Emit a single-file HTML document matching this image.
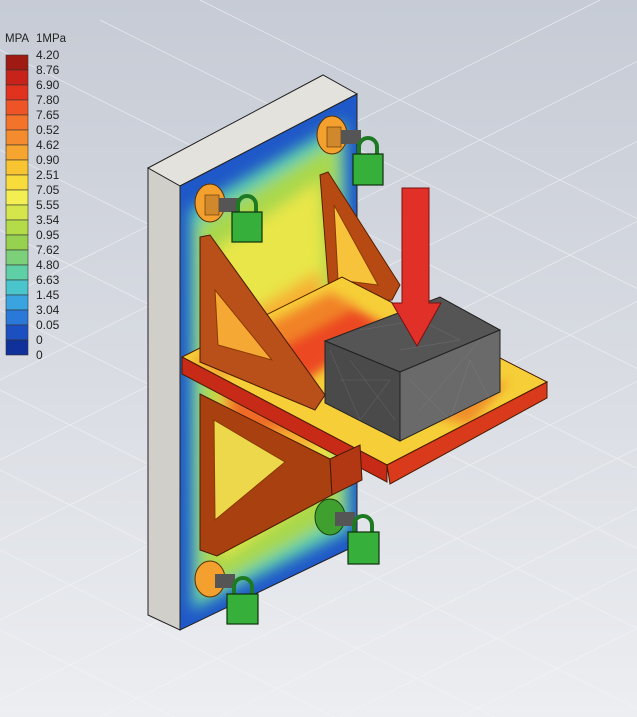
<!DOCTYPE html>
<html><head><meta charset="utf-8"><style>
html,body{margin:0;padding:0;overflow:hidden}
body{width:637px;height:717px;font-family:"Liberation Sans",sans-serif}
svg{display:block}
</style></head><body>
<svg width="637" height="717" viewBox="0 0 637 717" xmlns="http://www.w3.org/2000/svg">
<defs>
<linearGradient id="bg" x1="0" y1="0" x2="0" y2="1">
<stop offset="0" stop-color="#c6cbd5"/><stop offset="0.5" stop-color="#d8dbe2"/><stop offset="1" stop-color="#eceef1"/>
</linearGradient>
<filter id="bl" x="-20%" y="-20%" width="140%" height="140%"><feGaussianBlur stdDeviation="7"/></filter>
<filter id="bl2" x="-20%" y="-20%" width="140%" height="140%"><feGaussianBlur stdDeviation="5"/></filter>
<clipPath id="plate"><polygon points="180,186 357,94 357,545 180,630"/></clipPath>
<clipPath id="shelf"><polygon points="182,357 342,277 547,382 387,465"/></clipPath>
</defs>
<rect width="637" height="717" fill="url(#bg)"/>
<g stroke="#f4f5f7" stroke-width="1" opacity="0.6" fill="none">
<path d="M-100,260 L700,660 M-100,340 L700,740 M-100,420 L600,770 M-100,180 L700,580 M-100,100 L700,500 M0,50 L700,400 M100,20 L700,320 M200,0 L700,250 M-100,500 L500,800 M-100,580 L400,830"/>
<path d="M0,700 L700,350 M0,620 L700,270 M0,540 L700,190 M0,460 L700,110 M0,380 L700,30 M100,717 L700,417 M220,717 L700,477 M340,717 L700,537 M460,717 L700,597 M0,300 L600,0"/>
</g>
<!-- legend -->
<text x="5" y="42" font-size="11.5" fill="#222">MPA</text>
<text x="36" y="42" font-size="11.5" fill="#222">1MPa</text>
<g stroke="#333" stroke-width="0.6">
<rect x="6" y="55" width="22" height="15" fill="#9e1a12"/>
<rect x="6" y="70" width="22" height="15" fill="#c7231a"/>
<rect x="6" y="85" width="22" height="15" fill="#e0321f"/>
<rect x="6" y="100" width="22" height="15" fill="#ee5426"/>
<rect x="6" y="115" width="22" height="15" fill="#f3732b"/>
<rect x="6" y="130" width="22" height="15" fill="#f48c2e"/>
<rect x="6" y="145" width="22" height="15" fill="#f6a62f"/>
<rect x="6" y="160" width="22" height="15" fill="#f8c431"/>
<rect x="6" y="175" width="22" height="15" fill="#f8dc3c"/>
<rect x="6" y="190" width="22" height="15" fill="#f3ef52"/>
<rect x="6" y="205" width="22" height="15" fill="#d5e54c"/>
<rect x="6" y="220" width="22" height="15" fill="#b4dc48"/>
<rect x="6" y="235" width="22" height="15" fill="#96d250"/>
<rect x="6" y="250" width="22" height="15" fill="#7cd07a"/>
<rect x="6" y="265" width="22" height="15" fill="#5fd0a6"/>
<rect x="6" y="280" width="22" height="15" fill="#4bc5cc"/>
<rect x="6" y="295" width="22" height="15" fill="#3aa4e0"/>
<rect x="6" y="310" width="22" height="15" fill="#2a78d8"/>
<rect x="6" y="325" width="22" height="15" fill="#1c50c0"/>
<rect x="6" y="340" width="22" height="15" fill="#10309a"/>
</g>
<g font-size="12" fill="#222">
<text x="36" y="59">4.20</text><text x="36" y="74">8.76</text><text x="36" y="89">6.90</text><text x="36" y="104">7.80</text><text x="36" y="119">7.65</text><text x="36" y="134">0.52</text><text x="36" y="149">4.62</text><text x="36" y="164">0.90</text><text x="36" y="179">2.51</text><text x="36" y="194">7.05</text><text x="36" y="209">5.55</text><text x="36" y="224">3.54</text><text x="36" y="239">0.95</text><text x="36" y="254">7.62</text><text x="36" y="269">4.80</text><text x="36" y="284">6.63</text><text x="36" y="299">1.45</text><text x="36" y="314">3.04</text><text x="36" y="329">0.05</text><text x="36" y="344">0</text><text x="36" y="359">0</text>
</g>
<!-- wall plate -->
<polygon points="148,168 323,75 357,94 180,186" fill="#e4e2dc" stroke="#222" stroke-width="1"/>
<polygon points="148,168 180,186 180,630 148,615" fill="#d0cfca" stroke="#222" stroke-width="1"/>
<g clip-path="url(#plate)">
<rect x="170" y="80" width="200" height="560" fill="#1f58c8"/>
<g filter="url(#bl)">
<polygon points="190,210 345,120 350,530 192,610" fill="#5ccfb0"/>
<polygon points="198,225 338,140 342,515 200,595" fill="#a9d84c"/>
<polygon points="215,250 320,180 335,480 220,560" fill="#e8e64a"/>
<polygon points="220,330 320,270 335,440 225,480" fill="#f6b030"/>
<polygon points="225,360 315,310 330,420 230,440" fill="#ee6a26"/>
</g>
</g>
<polygon points="180,186 357,94 357,545 180,630" fill="none" stroke="#222" stroke-width="1"/>
<!-- bolts upper -->
<ellipse cx="210" cy="203" rx="15" ry="19" fill="#f3a02e" stroke="#5a3000"/>
<rect x="205" y="195" width="14" height="20" fill="#d0882c" stroke="#5a3000" stroke-width="0.6"/>
<rect x="219" y="198" width="20" height="14" fill="#555" />
<ellipse cx="332" cy="135" rx="15" ry="19" fill="#f3a02e" stroke="#5a3000"/>
<rect x="327" y="127" width="14" height="20" fill="#d0882c" stroke="#5a3000" stroke-width="0.6"/>
<rect x="341" y="130" width="20" height="14" fill="#555"/>
<!-- upper right gusset -->
<polygon points="320,175 328,172 400,285 392,300 330,305" fill="#b74a12" stroke="#5a2000"/>
<polygon points="334,205 338,280 378,285" fill="#f6c33a" stroke="#8a3a00"/>
<!-- shelf -->
<polygon points="182,357 342,277 547,382 387,465" fill="#f6cf38" stroke="#4a1a00"/>
<g clip-path="url(#shelf)" filter="url(#bl2)">
<polygon points="215,355 330,295 385,325 300,385" fill="#ec4a20"/>
<polygon points="190,360 330,290 360,305 220,380" fill="#f49a2c" opacity="0.7"/>
<polygon points="400,410 510,380 470,425" fill="#f0902a"/>
</g>
<polygon points="182,357 387,465 387,482 182,374" fill="#c72a16" stroke="#4a1a00"/>
<polygon points="387,465 547,382 547,398 390,484" fill="#d93a1c" stroke="#4a1a00"/>
<!-- lower gusset -->
<polygon points="200,394 330,459 332,495 217,556 200,550" fill="#a84010" stroke="#4a1a00"/>
<polygon points="214,420 215,520 285,462" fill="#ecd84a" stroke="#8a3a00"/>
<polygon points="330,459 360,445 362,480 332,495" fill="#b23814" stroke="#4a1a00"/>
<!-- upper left gusset -->
<polygon points="200,237 210,235 325,395 315,410 200,362" fill="#b9501a" stroke="#4a1a00"/>
<polygon points="215,290 218,345 272,360" fill="#f6a834" stroke="#8a3a00"/>
<!-- block -->
<polygon points="325,341 440,297 500,330 400,372" fill="#555" stroke="#222"/>
<polygon points="325,341 400,372 400,441 325,403" fill="#4a4a4a" stroke="#222"/>
<polygon points="400,372 500,330 500,392 400,441" fill="#6a6a6a" stroke="#222"/>
<g stroke="#999" stroke-width="0.3" fill="none" opacity="0.6">
<path d="M330,350 L360,420 L390,380 L340,380 M350,360 L395,420 M410,380 L450,420 L470,360 L490,400 M420,410 L480,340 M360,330 L420,320 L460,340 L400,350"/>
</g>
<!-- arrow -->
<polygon points="402,188 429,188 429,303 441,303 417,346 392,303 402,303" fill="#e03028" stroke="#7a1010"/>
<!-- bolts lower -->
<ellipse cx="330" cy="517" rx="15" ry="18" fill="#3fa030" stroke="#1a4010"/>
<rect x="335" y="512" width="20" height="14" fill="#555"/>
<ellipse cx="210" cy="579" rx="15" ry="18" fill="#f3a02e" stroke="#5a3000"/>
<rect x="215" y="574" width="20" height="14" fill="#555"/>
<!-- locks -->
<g fill="#36b03a" stroke="#103010" stroke-width="1.2">
<path d="M238,213 v-8 a9,9 0 0 1 18,0 v8" fill="none" stroke="#1d7a22" stroke-width="4"/>
<rect x="232" y="212" width="30" height="30"/>
<path d="M359,155 v-8 a9,9 0 0 1 18,0 v8" fill="none" stroke="#1d7a22" stroke-width="4"/>
<rect x="353" y="154" width="30" height="31"/>
<path d="M354,533 v-8 a9,9 0 0 1 18,0 v8" fill="none" stroke="#1d7a22" stroke-width="4"/>
<rect x="348" y="532" width="31" height="32"/>
<path d="M234,595 v-8 a9,9 0 0 1 18,0 v8" fill="none" stroke="#1d7a22" stroke-width="4"/>
<rect x="227" y="594" width="31" height="30"/>
</g>
</svg>
</body></html>
